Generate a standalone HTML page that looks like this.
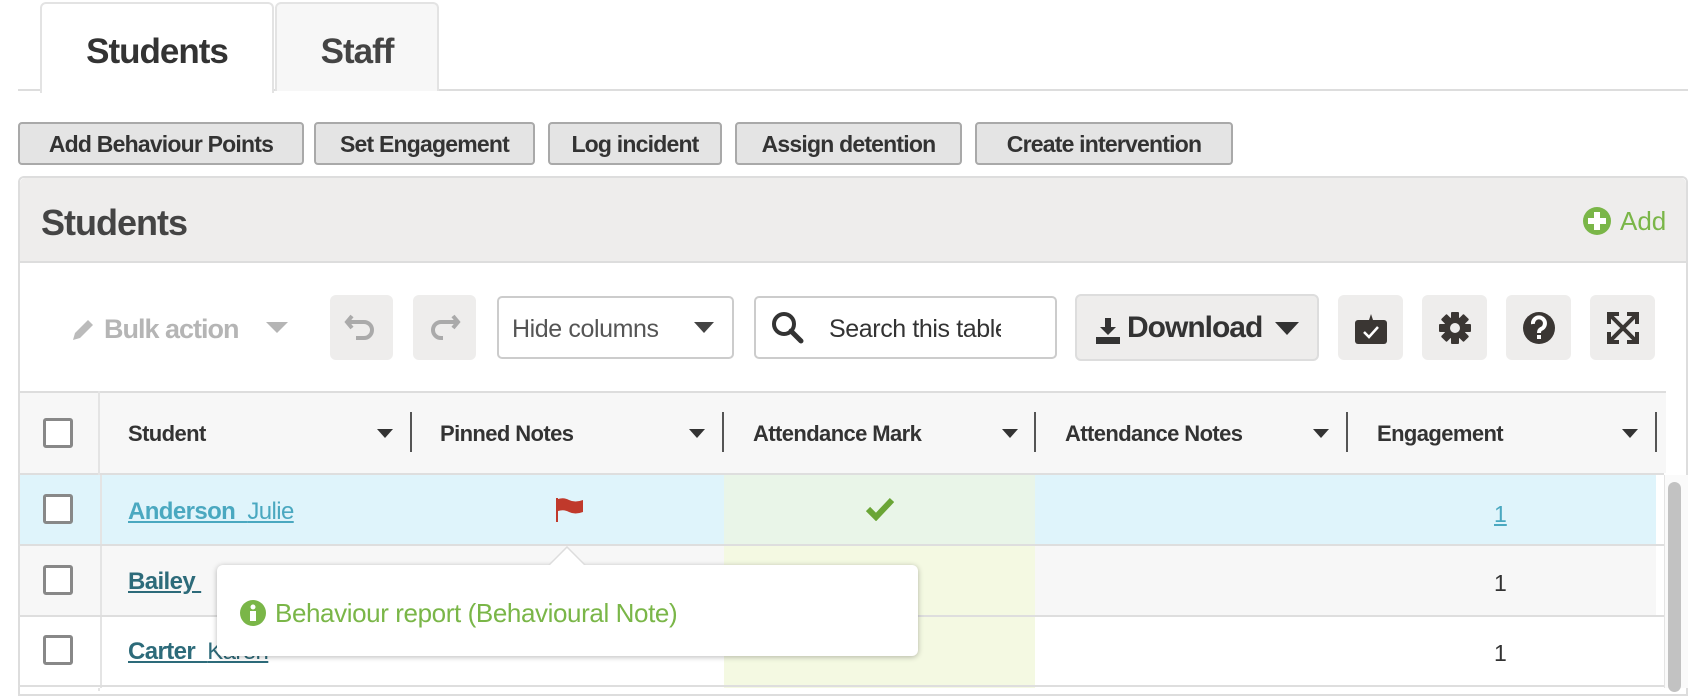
<!DOCTYPE html>
<html><head><style>
*{box-sizing:border-box;margin:0;padding:0}
body{width:1694px;height:688px;overflow:hidden;background:#fff;font-family:"Liberation Sans",sans-serif;color:#333;position:relative}
.a{position:absolute}
.tab{position:absolute;top:2px;height:89px;border:2px solid #e3e3e3;border-bottom:none;border-radius:6px 6px 0 0;font-weight:bold;font-size:35px;text-align:center;line-height:96px;letter-spacing:-1px}
.btn{position:absolute;top:122px;height:43px;background:#e4e4e4;border:2px solid #a9a9a9;border-radius:4px;font-size:23px;font-weight:bold;line-height:41px;text-align:center;color:#333;letter-spacing:-0.8px}
.ib{position:absolute;top:295px;width:65px;height:65px;background:#eeedec;border-radius:6px}
.th{position:absolute;top:391px;height:82px;font-size:22px;font-weight:bold;line-height:86px;letter-spacing:-0.6px}
.sep{position:absolute;top:412px;width:2px;height:40px;background:#555}
.car{position:absolute;width:0;height:0;border-left:8px solid transparent;border-right:8px solid transparent;border-top:9px solid #333}
.cb{position:absolute;left:43px;width:30px;height:30px;border:3px solid #888;border-radius:3px;background:#fff}
.hl{position:absolute;left:18px;width:1646px;height:2px;background:#dedede}
.nm{position:absolute;left:128px;font-size:24px;font-weight:bold;text-decoration:underline;letter-spacing:-0.6px}
</style></head><body>
<div class="a" style="left:18px;top:89px;width:1670px;height:2px;background:#ddd"></div>
<div class="tab" style="left:40px;width:234px;background:#fff;height:91px">Students</div>
<div class="tab" style="left:275px;width:164px;background:#f7f7f7;color:#444">Staff</div>

<div class="btn" style="left:18px;width:286px">Add Behaviour Points</div>
<div class="btn" style="left:314px;width:221px">Set Engagement</div>
<div class="btn" style="left:548px;width:174px">Log incident</div>
<div class="btn" style="left:735px;width:227px">Assign detention</div>
<div class="btn" style="left:975px;width:258px">Create intervention</div>

<div class="a" style="left:18px;top:176px;width:1670px;height:520px;border:2px solid #ddd;border-radius:6px 6px 0 0"></div>
<div class="a" style="left:20px;top:178px;width:1666px;height:85px;background:#eeedec;border-bottom:2px solid #ddd;border-radius:5px 5px 0 0"></div>
<div class="a" style="left:41px;top:202px;font-size:36px;font-weight:bold;color:#444;letter-spacing:-1px">Students</div>
<svg class="a" style="left:1582px;top:206px" width="30" height="30" viewBox="0 0 30 30"><circle cx="15" cy="15" r="14" fill="#7ab648"/><rect x="12" y="6" width="6" height="18" fill="#fff"/><rect x="6" y="12" width="18" height="6" fill="#fff"/></svg>
<div class="a" style="left:1620px;top:206px;font-size:26px;color:#7ab648">Add</div>

<svg class="a" style="left:70px;top:317px" width="26" height="26" viewBox="0 0 26 26"><path d="M3 23 L5 16 L18 3 L23 8 L10 21 Z" fill="#bbb"/></svg>
<div class="a" style="left:104px;top:314px;font-size:27px;font-weight:bold;color:#b5b5b5;letter-spacing:-1px">Bulk action</div>
<div class="car" style="left:266px;top:322px;border-top-color:#b5b5b5;border-left-width:11px;border-right-width:11px;border-top-width:11px"></div>
<div class="ib" style="left:330px;width:63px"></div>
<div class="ib" style="left:413px;width:63px"></div>
<svg class="a" style="left:344px;top:312px" width="34" height="30" viewBox="0 0 34 30"><path d="M8 4 L3 10 L8 16 M3 10 H20 a8 8 0 0 1 0 16 H12" fill="none" stroke="#aaa" stroke-width="4"/></svg>
<svg class="a" style="left:427px;top:312px" width="34" height="30" viewBox="0 0 34 30"><path d="M26 4 L31 10 L26 16 M31 10 H14 a8 8 0 0 0 0 16 H16" fill="none" stroke="#aaa" stroke-width="4"/></svg>

<div class="a" style="left:497px;top:296px;width:237px;height:63px;border:2px solid #ccc;border-radius:5px"></div>
<div class="a" style="left:512px;top:315px;font-size:25px;color:#555;letter-spacing:-0.4px">Hide columns</div>
<div class="car" style="left:694px;top:322px;border-top-color:#444;border-left-width:10px;border-right-width:10px;border-top-width:11px"></div>
<div class="a" style="left:754px;top:296px;width:303px;height:63px;border:2px solid #ccc;border-radius:5px"></div>
<svg class="a" style="left:771px;top:311px" width="34" height="34" viewBox="0 0 34 34"><circle cx="13" cy="13" r="10" fill="none" stroke="#333" stroke-width="4"/><path d="M20 20 L30 30" stroke="#333" stroke-width="5" stroke-linecap="round"/></svg>
<div class="a" style="left:829px;top:315px;font-size:25px;color:#333;width:172px;overflow:hidden;white-space:nowrap;letter-spacing:-0.4px">Search this table</div>

<div class="a" style="left:1075px;top:294px;width:244px;height:67px;background:#eeedec;border:2px solid #ddd;border-radius:6px"></div>
<svg class="a" style="left:1096px;top:318px" width="24" height="26" viewBox="0 0 24 26"><path d="M9 0 H15 V9 H20 L12 17 L4 9 H9 Z" fill="#333"/><rect x="0" y="19" width="24" height="7" fill="#333"/></svg>
<div class="a" style="left:1127px;top:311px;font-size:30px;font-weight:bold;color:#333;letter-spacing:-1px">Download</div>
<div class="car" style="left:1275px;top:322px;border-left-width:12px;border-right-width:12px;border-top-width:13px"></div>

<div class="ib" style="left:1338px"></div>
<div class="ib" style="left:1422px"></div>
<div class="ib" style="left:1506px"></div>
<div class="ib" style="left:1590px"></div>
<svg class="a" style="left:1354px;top:310px" width="34" height="36" viewBox="0 0 34 36"><path d="M15 10 L17 4 L19 10 Z" fill="#3a3633"/><rect x="1" y="10" width="32" height="24" rx="3" fill="#3a3633"/><path d="M10 22 L15 27 L24 17" fill="none" stroke="#fff" stroke-width="2.5"/></svg>
<svg class="a" style="left:1438px;top:311px" width="34" height="34" viewBox="0 0 34 34"><g fill="#3a3633"><circle cx="17" cy="17" r="11"/><rect x="13" y="1" width="8" height="32" rx="1"/><rect x="1" y="13" width="32" height="8" rx="1"/><rect x="13" y="1" width="8" height="32" rx="1" transform="rotate(45 17 17)"/><rect x="13" y="1" width="8" height="32" rx="1" transform="rotate(-45 17 17)"/></g><circle cx="17" cy="17" r="5" fill="#eeedec"/></svg>
<svg class="a" style="left:1522px;top:311px" width="34" height="34" viewBox="0 0 34 34"><circle cx="17" cy="17" r="16" fill="#3a3633"/><path d="M11 13 a6 6 0 1 1 8 5 q-2 1 -2 4" fill="none" stroke="#fff" stroke-width="4"/><rect x="15" y="24" width="4" height="4" fill="#fff"/></svg>
<svg class="a" style="left:1606px;top:311px" width="34" height="34" viewBox="0 0 34 34"><g stroke="#3a3633" stroke-width="4" fill="none"><path d="M5 5 L29 29 M29 5 L5 29"/><path d="M3 13 V3 H13 M21 3 H31 V13 M31 21 V31 H21 M13 31 H3 V21"/></g></svg>

<div class="a" style="left:20px;top:391px;width:1646px;height:82px;background:#f7f7f7;border-top:2px solid #ddd"></div>
<div class="hl" style="top:473px"></div>
<div class="a" style="left:98px;top:391px;width:2px;height:300px;background:#e4e4e4"></div>
<div class="cb" style="top:418px"></div>
<div class="th" style="left:128px">Student</div><div class="car" style="left:377px;top:429px"></div><div class="sep" style="left:410px"></div>
<div class="th" style="left:440px">Pinned Notes</div><div class="car" style="left:689px;top:429px"></div><div class="sep" style="left:722px"></div>
<div class="th" style="left:753px">Attendance Mark</div><div class="car" style="left:1002px;top:429px"></div><div class="sep" style="left:1034px"></div>
<div class="th" style="left:1065px">Attendance Notes</div><div class="car" style="left:1313px;top:429px"></div><div class="sep" style="left:1346px"></div>
<div class="th" style="left:1377px">Engagement</div><div class="car" style="left:1622px;top:429px"></div><div class="sep" style="left:1655px"></div>

<div class="a" style="left:20px;top:475px;width:1636px;height:69px;background:#dff4fb"></div>
<div class="a" style="left:20px;top:546px;width:1636px;height:69px;background:#f7f7f7"></div>
<div class="a" style="left:20px;top:617px;width:1636px;height:71px;background:#fff"></div>
<div class="a" style="left:100px;top:475px;width:2px;height:213px;background:#e4e4e4"></div>
<div class="a" style="left:724px;top:475px;width:311px;height:213px;background:#f4f9e2"></div>
<div class="a" style="left:724px;top:475px;width:311px;height:69px;background:#e9f5e8"></div>
<div class="hl" style="top:544px"></div>
<div class="hl" style="top:615px"></div>
<div class="hl" style="top:685px"></div>
<div class="a" style="left:1664px;top:475px;width:24px;height:213px;background:#fafafa;border-left:1px solid #e4e4e4"></div>
<div class="a" style="left:1668px;top:482px;width:13px;height:210px;background:#c2c2c2;border-radius:7px"></div>

<div class="cb" style="top:494px"></div>
<div class="cb" style="top:565px"></div>
<div class="cb" style="top:635px"></div>
<div class="nm" style="top:498px;color:#4aa8c0">Anderson&nbsp; <span style="font-weight:normal">Julie</span></div>
<div class="nm" style="top:568px;color:#2d6b7a">Bailey&nbsp;</div>
<div class="nm" style="top:638px;color:#2d6b7a">Carter&nbsp; <span style="font-weight:normal">Karen</span></div>
<svg class="a" style="left:555px;top:497px" width="30" height="26" viewBox="0 0 30 26"><rect x="1" y="1" width="2" height="24" fill="#c0392b"/><path d="M3 2 Q9 0 14 3 Q20 6 28 3 V15 Q20 18 14 15 Q9 12 3 14 Z" fill="#c0392b"/></svg>
<svg class="a" style="left:866px;top:497px" width="28" height="24" viewBox="0 0 28 24"><path d="M2 12 L10 20 L26 3" fill="none" stroke="#6aa536" stroke-width="6"/></svg>
<div class="a" style="left:1494px;top:501px;font-size:23px;color:#4aa8c0;text-decoration:underline">1</div>
<div class="a" style="left:1494px;top:570px;font-size:23px;color:#333">1</div>
<div class="a" style="left:1494px;top:640px;font-size:23px;color:#333">1</div>

<div class="a" style="left:217px;top:565px;width:701px;height:91px;background:#fff;border-radius:6px;box-shadow:0 1px 6px rgba(0,0,0,0.28)"></div>
<svg class="a" style="left:547px;top:546px" width="40" height="21" viewBox="0 0 40 21"><path d="M0 21 L20 1 L40 21" fill="#fff" stroke="#ddd" stroke-width="1.5"/><rect x="0" y="19" width="40" height="3" fill="#fff"/></svg>
<svg class="a" style="left:239px;top:599px" width="28" height="28" viewBox="0 0 28 28"><circle cx="14" cy="14" r="13" fill="#7ab648"/><circle cx="14" cy="8" r="2.5" fill="#fff"/><rect x="11" y="12" width="6" height="10" fill="#fff"/></svg>
<div class="a" style="left:275px;top:598px;font-size:26px;color:#7ab648;letter-spacing:-0.4px">Behaviour report (Behavioural Note)</div>
</body></html>
